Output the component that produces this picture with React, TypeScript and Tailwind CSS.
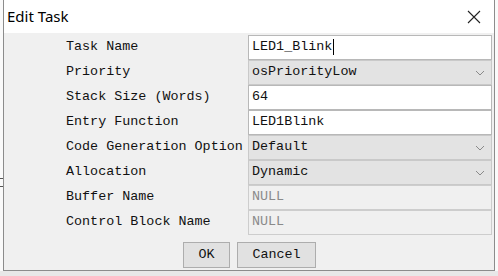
const mono = { fontFamily: '"Liberation Mono", "DejaVu Sans Mono", monospace' };

type Field = { label: string; value: string; kind: "text" | "select" | "disabled"; caret?: boolean };

const fields: Field[] = [
  { label: "Task Name", value: "LED1_Blink", kind: "text", caret: true },
  { label: "Priority", value: "osPriorityLow", kind: "select" },
  { label: "Stack Size (Words)", value: "64", kind: "text" },
  { label: "Entry Function", value: "LED1Blink", kind: "text" },
  { label: "Code Generation Option", value: "Default", kind: "select" },
  { label: "Allocation", value: "Dynamic", kind: "select" },
  { label: "Buffer Name", value: "NULL", kind: "disabled" },
  { label: "Control Block Name", value: "NULL", kind: "disabled" },
];

function Chevron() {
  return (
    <svg width="10" height="6" viewBox="0 0 10 6" className="mr-[6px]">
      <path d="M1 1 L5 5 L9 1" fill="none" stroke="#8a8a8a" strokeWidth="1" />
    </svg>
  );
}

function Control({ f }: { f: Field }) {
  const base = "flex h-[25px] w-[244px] items-center justify-between border pl-[3px] text-[13.4px]";
  if (f.kind === "select") {
    return (
      <div className={`${base} border-[#c9c9c9] bg-[#e3e3e3] text-[#111]`}>
        <span>{f.value}</span>
        <Chevron />
      </div>
    );
  }
  if (f.kind === "disabled") {
    return (
      <div className={`${base} border-[#cdcdcd] bg-[#f0f0f0] text-[#8a8a8a]`}>
        <span>{f.value}</span>
      </div>
    );
  }
  return (
    <div className={`${base} border-[#b8b8b8] bg-white text-[#111]`}>
      <span className="flex items-center">
        {f.value}
        {f.caret && <span className="ml-px inline-block h-[16px] w-px bg-black" />}
      </span>
    </div>
  );
}

export default function App() {
  return (
    <div className="relative h-[276px] w-[498px] overflow-hidden bg-[#fafafa]">
      {/* bits of the window behind */}
      <div className="absolute left-0 top-[178px] h-px w-[3px] bg-[#555]" />
      <div className="absolute left-0 top-[186px] h-px w-[3px] bg-[#555]" />

      <div className="ml-[3px] flex h-[271px] w-[492px] flex-col border-x border-b border-[#8c8c8c] bg-[#f0f0f0]">
        <div className="flex h-[33px] items-center justify-between bg-white pl-[3px] pr-[13px]">
          <span className="text-[15px] text-black" style={{ fontFamily: '"Noto Sans", "Liberation Sans", sans-serif' }}>
            Edit Task
          </span>
          <svg width="14" height="14" viewBox="0 0 14 14">
            <path d="M1 1 L13 13 M13 1 L1 13" stroke="#222" strokeWidth="1.1" />
          </svg>
        </div>

        <div className="flex flex-col pt-[2px]" style={mono}>
          {fields.map((f) => (
            <div key={f.label} className="flex h-[25px] items-center">
              <div className="w-[244px] pl-[62px] text-[13.4px] text-[#111]">{f.label}</div>
              <Control f={f} />
            </div>
          ))}
        </div>

        <div className="mt-[7px] flex gap-[7px] pl-[179px]" style={mono}>
          <button className="h-[26px] w-[47px] border border-[#adadad] bg-[#e1e1e1] text-[13.4px] text-[#111]">OK</button>
          <button className="h-[26px] w-[79px] border border-[#adadad] bg-[#e1e1e1] text-[13.4px] text-[#111]">Cancel</button>
        </div>
      </div>
      <div className="h-[5px] bg-[#e8e8e8]" />
    </div>
  );
}
